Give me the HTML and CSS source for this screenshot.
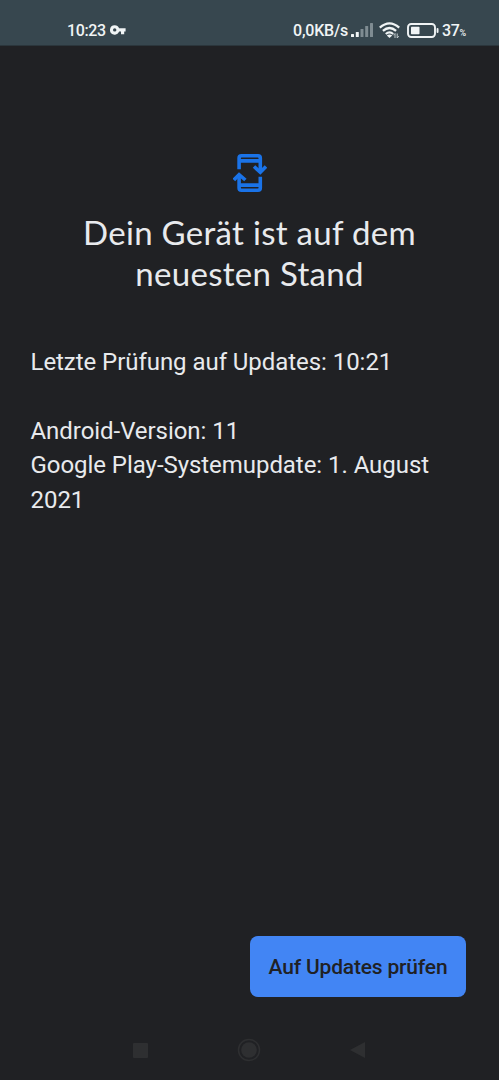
FILE: index.html
```html
<!DOCTYPE html>
<html lang="de">
<head>
<meta charset="utf-8">
<title>Systemupdate</title>
<link rel="stylesheet" href="styles.css">
</head>
<body>
<div class="screen">
  <header class="status">
    <div class="status-left">
      <span class="clock">10:23</span>
      <svg class="key" width="16" height="10" viewBox="0 0 16 10"><path fill="#f0f4f5" fill-rule="evenodd" d="M4.700 0.200a4.700 4.700 0 0 1 4.400 3.100H15.600v3.300h-1.400v2.700h-3.200v-2.700H9.100A4.700 4.700 0 1 1 4.700.2zM4.700 3.200a1.700 1.700 0 1 0 0 3.400a1.700 1.700 0 0 0 0-3.400z"/></svg>
    </div>
    <div class="status-right">
      <span class="speed">0,0KB/s</span>
      <svg class="signal" width="22" height="14" viewBox="0 0 22 14"><g fill="#f0f4f5"><rect x="0" y="11" width="3" height="3" rx=".5"/><rect x="4.800" y="9" width="3" height="5" rx=".5"/></g><g fill="#7f8c92"><rect x="9.500" y="6" width="3" height="8" rx=".5"/><rect x="14.200" y="3" width="3" height="11" rx=".5"/><rect x="19" y="0" width="3" height="14" rx=".5"/></g></svg>
      <svg class="wifi" width="22" height="17" viewBox="0 0 22 17"><g fill="none" stroke="#f0f4f5" stroke-width="2.300"><path d="M.8 5.600Q10.500-2.900 20.200 5.600"/><path d="M3.900 8.900Q10.500 3.100 17.100 8.900"/><path d="M6.800 12Q10.500 8.800 14.200 12"/></g><path fill="#f0f4f5" d="M7.800 13.500Q10.500 11.600 13.200 13.500L10.500 16z"/><path d="M16 16v-4.500l-1.600 1.800M18.200 11.500V16l1.600-1.800" fill="none" stroke="#c3cccf" stroke-width="1"/></svg>
      <svg class="battery" width="32" height="15" viewBox="0 0 32 15"><rect x="1" y="1" width="27" height="13" rx="3.200" fill="none" stroke="#f0f4f5" stroke-width="1.900"/><rect x="4" y="3.700" width="8.500" height="7.600" rx=".7" fill="#f0f4f5"/><rect x="29.600" y="5" width="1.900" height="5" rx=".9" fill="#f0f4f5"/></svg>
      <span class="percent">37<small>%</small></span>
    </div>
  </header>
  <main class="content">
    <svg class="update" width="34" height="38" viewBox="0 0 34 38"><g fill="none" stroke="#1a73e8"><path stroke-width="3.600" d="M6.100 15.200V4Q6.100 1.800 8.400 1.800H25Q27.300 1.800 27.300 4V16.500M27.300 22.800V34Q27.300 36.200 25 36.200H8.400Q6.100 36.200 6.100 34V21"/><path stroke-width="3.600" d="M6 6.900H27M6 31.100H27M21 12.500L27.300 18.200L33 12.500M.9 26L6.100 20.600L12.400 26"/></g></svg>
    <h1>Dein Gerät ist auf dem<br>neuesten Stand</h1>
    <p class="checked">Letzte Prüfung auf Updates: 10:21</p>
    <p class="version">Android-Version: 11<br>Google Play-Systemupdate: 1. August 2021</p>
  </main>
  <footer class="actions"><button class="check">Auf Updates prüfen</button></footer>
  <nav class="navbar">
    <svg width="15" height="15"><rect width="15" height="15" rx="1" fill="#2e2f31"/></svg>
    <svg width="24" height="24"><circle cx="12" cy="12" r="10.500" fill="none" stroke="#2e2f31" stroke-width="1.500"/><circle cx="12" cy="12" r="7.800" fill="#2e2f31"/></svg>
    <svg width="15" height="16"><path d="M0 8L15 0V16z" fill="#2e2f31"/></svg>
  </nav>
</div>
</body>
</html>
```
FILE: styles.css
```css
* { box-sizing: border-box; }
body { margin: 0; background: #202124; color: #e8eaed; font-family: Roboto, sans-serif; }
svg { display: block; flex: none; }
.screen { width: 499px; height: 1080px; display: flex; flex-direction: column; overflow: hidden; }
.status { height: 46px; flex: none; background: #37474f; border-bottom: 1px solid #2b363c; padding: 15px 32px 0 67px; display: flex; justify-content: space-between; color: #f0f4f5; font-size: 16px; line-height: 30px; font-weight: 500; }
.status-left, .status-right { display: flex; align-items: center; height: 30px; white-space: nowrap; }
.clock, .speed, .percent { padding-top: 1px; }
.clock { width: 43px; letter-spacing: -.35px; }
.speed { width: 58px; letter-spacing: -.2px; }
.wifi { margin-left: 6px; margin-right: 1px; }
.battery { margin-left: 5px; }
.percent { margin-left: 3px; width: 25px; letter-spacing: -.4px; }
.percent small { font-size: 9px; line-height: 1; }
.content { flex: 1; padding: 108px 30px 0; }
.update { margin: 0 auto; }
h1 { margin: 20px 0 0; text-align: center; font: 400 33px/41px Lato, sans-serif; letter-spacing: .3px; }
p { margin: 0 0 0 .5px; font-size: 24px; line-height: 34.600px; letter-spacing: -.05px; }
.checked { margin-top: 51px; }
.version { margin-top: 34px; }
.actions { flex: none; display: flex; justify-content: flex-end; padding-right: 33px; }
.check { width: 216px; height: 61px; padding: 1px 0 0; border: 0; border-radius: 8px; background: #4285f4; color: #202124; font: 500 21px/28px Roboto, sans-serif; letter-spacing: -.18px; }
.navbar { height: 83px; flex: none; display: flex; align-items: center; justify-content: space-between; padding: 23px 134px 0 133px; }
```
